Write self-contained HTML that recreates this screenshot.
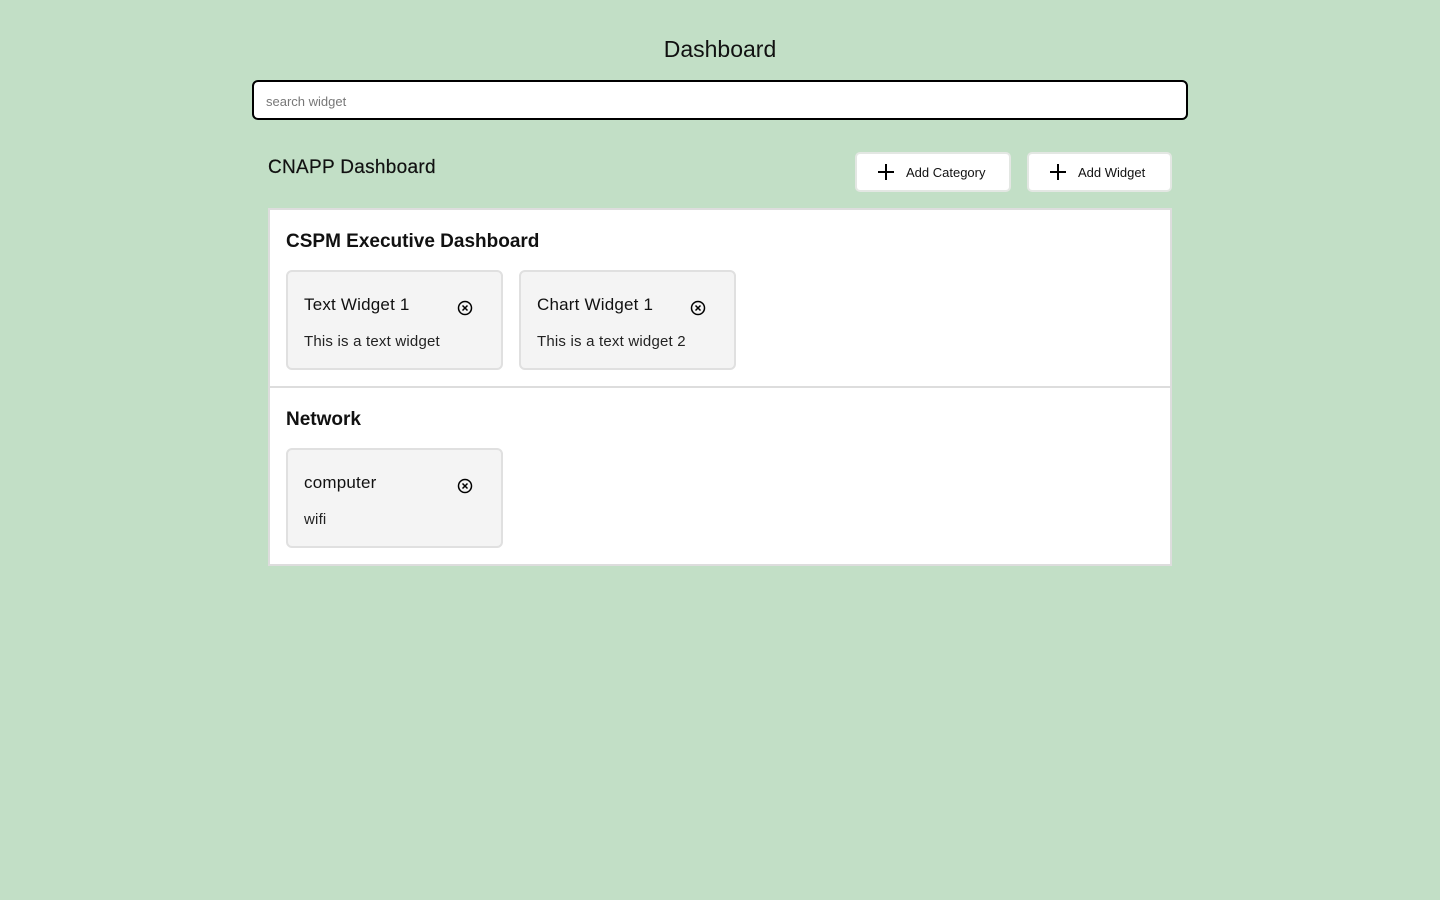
<!DOCTYPE html>
<html><head><style>
*{box-sizing:border-box;margin:0;padding:0}
body{width:1440px;height:900px;background:#c2dfc6;font-family:"Liberation Sans",sans-serif;color:#111;position:relative}
.abs{position:absolute}
h1{position:absolute;top:36px;left:0;width:1440px;text-align:center;font-size:23px;font-weight:normal}
.search{left:252px;top:80px;width:936px;height:40px;background:#fff;border:2px solid #000;border-radius:6px;font-size:13px;color:#777;padding:12px 12px}
.btn{top:152px;height:40px;background:#fff;border:2px solid #e3e7e3;border-radius:5px;font-size:13px;display:flex;align-items:center;padding-left:20px}
.btn svg{margin-right:11px}
.panel{left:268px;width:904px;background:#fff;border:2px solid #ddd}
.cat{position:absolute;left:16px;font-size:19px;font-weight:bold}
.card{position:absolute;width:217px;height:100px;background:#f4f4f4;border:2px solid #e0e0e0;border-radius:6px}
.card .t{position:absolute;left:16px;top:23px;font-size:17px;letter-spacing:0.2px}
.card .d{position:absolute;left:16px;top:61px;font-size:15px;color:#222;letter-spacing:0.2px}
.card svg{position:absolute;left:169px;top:28px}
</style></head><body>
<h1>Dashboard</h1>
<div class="abs search">search widget</div>
<div class="abs" style="left:268px;top:157px;font-size:19px;letter-spacing:0.3px;-webkit-text-stroke:0.2px #111">CNAPP Dashboard</div>
<div class="abs btn" style="left:855px;width:156px"><svg width="18" height="18"><path d="M9 1V17M1 9H17" stroke="#000" stroke-width="2"/></svg>Add Category</div>
<div class="abs btn" style="left:1027px;width:145px"><svg width="18" height="18"><path d="M9 1V17M1 9H17" stroke="#000" stroke-width="2"/></svg>Add Widget</div>
<div class="abs panel" style="top:208px;height:180px">
 <div class="cat" style="top:21px">CSPM Executive Dashboard</div>
 <div class="card" style="left:16px;top:60px"><div class="t">Text Widget 1</div><div class="d">This is a text widget</div><svg width="16" height="16"><circle cx="8" cy="8" r="6.5" fill="none" stroke="#000" stroke-width="1.5"/><path d="M5.5 5.5L10.5 10.5M10.5 5.5L5.5 10.5" stroke="#000" stroke-width="1.5"/></svg></div>
 <div class="card" style="left:249px;top:60px"><div class="t">Chart Widget 1</div><div class="d">This is a text widget 2</div><svg width="16" height="16"><circle cx="8" cy="8" r="6.5" fill="none" stroke="#000" stroke-width="1.5"/><path d="M5.5 5.5L10.5 10.5M10.5 5.5L5.5 10.5" stroke="#000" stroke-width="1.5"/></svg></div>
</div>
<div class="abs panel" style="top:386px;height:180px">
 <div class="cat" style="top:21px">Network</div>
 <div class="card" style="left:16px;top:60px"><div class="t">computer</div><div class="d">wifi</div><svg width="16" height="16"><circle cx="8" cy="8" r="6.5" fill="none" stroke="#000" stroke-width="1.5"/><path d="M5.5 5.5L10.5 10.5M10.5 5.5L5.5 10.5" stroke="#000" stroke-width="1.5"/></svg></div>
</div>
</body></html>
